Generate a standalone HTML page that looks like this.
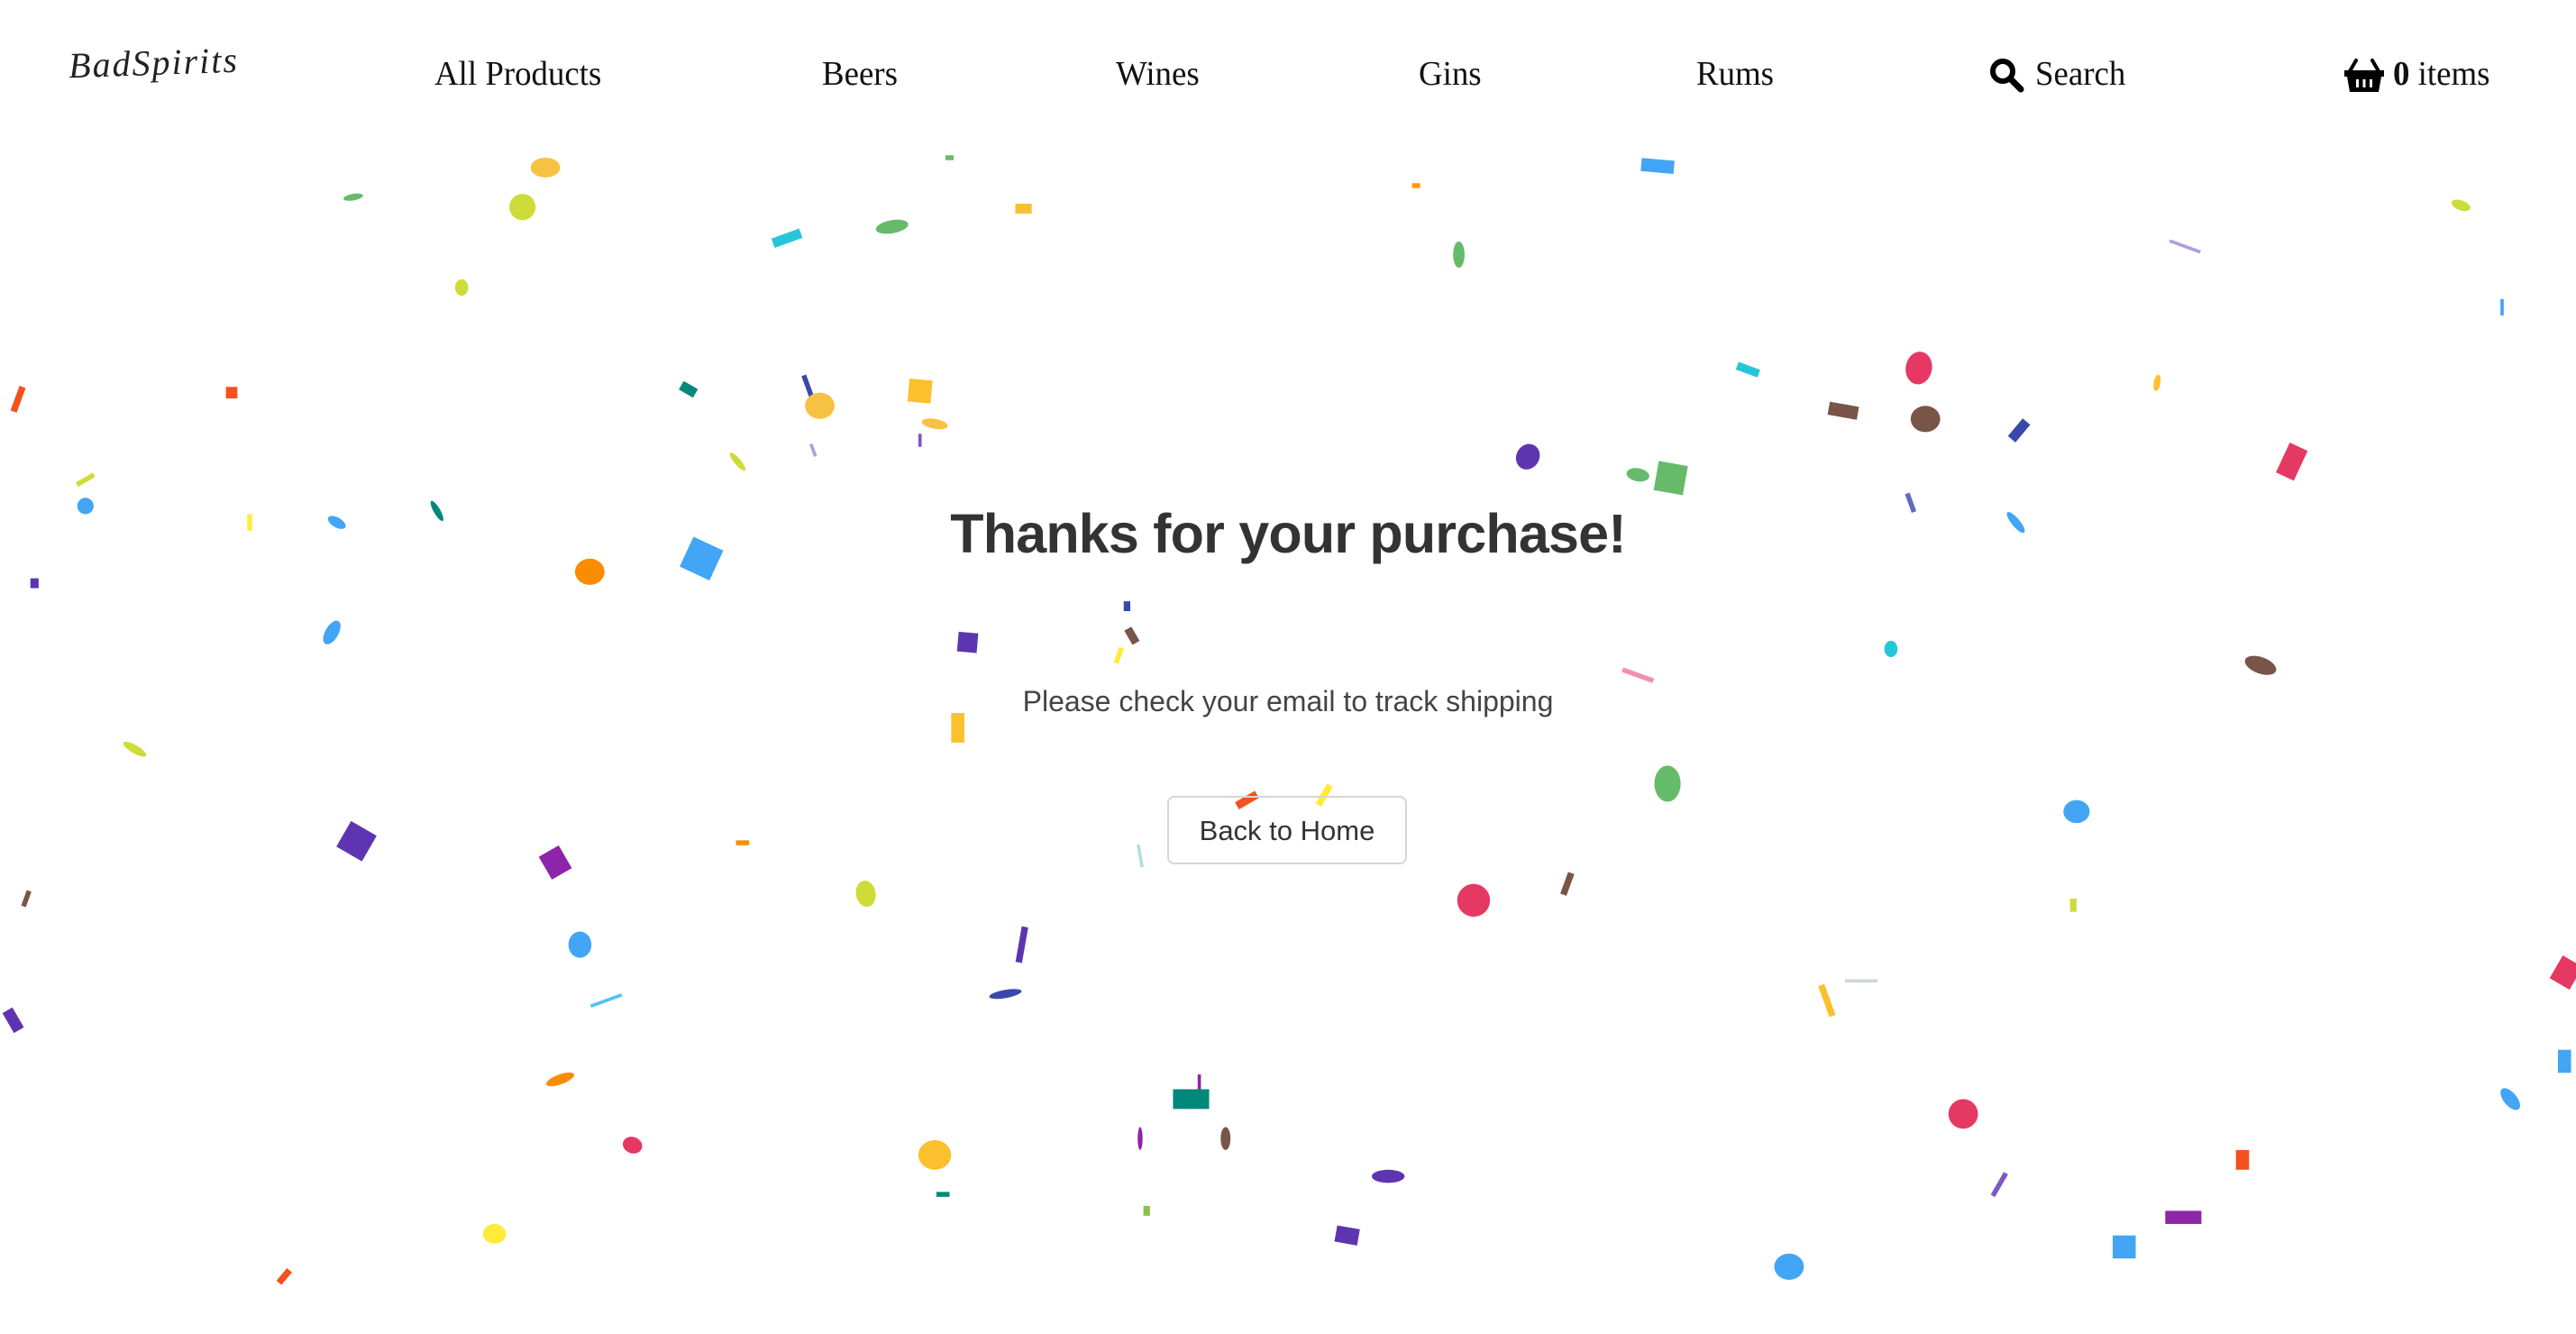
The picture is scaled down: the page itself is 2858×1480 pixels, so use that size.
<!DOCTYPE html>
<html><head><meta charset="utf-8"><style>
html,body{margin:0;padding:0;background:#fff;width:2858px;height:1480px;overflow:hidden;position:relative;font-family:"Liberation Sans",sans-serif}
.nav{position:absolute;top:60px;font-family:"Liberation Serif",serif;font-size:38px;color:#111;line-height:44px;white-space:nowrap;transform-origin:left center;transform:scaleX(0.97)}
.logo{position:absolute;left:76px;top:46px;font-family:"Liberation Serif",serif;font-style:italic;font-size:40px;color:#222;letter-spacing:2px;transform:rotate(-2deg)}
#conf{position:absolute;left:0;top:0;width:1568px;height:812px;transform:scale(1.8227);transform-origin:0 0}
#conf i{position:absolute;display:block;transform:translate(-50%,-50%)}
h1{position:absolute;left:0;width:2858px;top:557px;margin:0;text-align:center;font-size:61px;font-weight:bold;color:#333;letter-spacing:-0.8px}
.sub{position:absolute;left:0;width:2858px;top:760px;text-align:center;font-size:32px;color:#444}
.btn{position:absolute;left:1295px;top:883px;width:266px;height:76px;border:2px solid #d6d6d6;border-radius:8px;box-sizing:border-box;text-align:center;line-height:74px;font-size:31px;color:#333;background:transparent}
</style></head><body>
<div id="conf"></div>
<div class="logo">BadSpirits</div>
<div class="nav" style="left:482px">All Products</div>
<div class="nav" style="left:912px">Beers</div>
<div class="nav" style="left:1238px">Wines</div>
<div class="nav" style="left:1574px">Gins</div>
<div class="nav" style="left:1882px">Rums</div>
<svg style="position:absolute;left:2206px;top:63px" width="40" height="40" viewBox="0 0 40 40"><circle cx="16" cy="16" r="11" fill="none" stroke="#000" stroke-width="6"/><line x1="24" y1="24" x2="36" y2="36" stroke="#000" stroke-width="7" stroke-linecap="round"/></svg>
<div class="nav" style="left:2258px">Search</div>
<svg style="position:absolute;left:2600px;top:63px" width="46" height="40" viewBox="0 0 46 40"><path d="M14 4 L7 16 M32 4 L39 16" stroke="#000" stroke-width="4" stroke-linecap="round"/><rect x="1" y="15" width="44" height="7" fill="#000"/><path d="M4 22 H42 L39 39 H7 Z" fill="#000"/><rect x="14" y="25" width="3" height="9" fill="#fff"/><rect x="21.5" y="25" width="3" height="9" fill="#fff"/><rect x="29" y="25" width="3" height="9" fill="#fff"/></svg>
<div class="nav" style="left:2655px"><b>0</b> items</div>
<h1>Thanks for your purchase!</h1>
<div class="sub">Please check your email to track shipping</div>
<div class="btn">Back to Home</div>
<script>
var d=[[332,102,18,12,"#f7c244",0,1],[318,126,16,16,"#cddc39",0,1],[215,120,12,4,"#66bb6a",-10,1],[281,175,8,10,"#cddc39",0,1],[578,96,5,3,"#66bb6a",0,0],[623,127,10,6,"#fbc02d",0,0],[543,138,20,8,"#66bb6a",-10,1],[479,145,18,6,"#26c6da",-20,0],[1009,101,20,8,"#42a5f5",5,0],[862,113,5,3,"#ff9800",0,0],[888,155,7,16,"#66bb6a",0,1],[1498,125,12,6,"#cddc39",20,1],[1330,150,20,2,"#b39ddb",20,0],[1523,187,2,10,"#42a5f5",0,0],[11,243,4,16,"#f4511e",20,0],[141,239,7,7,"#f4511e",0,0],[419,237,10,6,"#00897b",30,0],[492,236,3,16,"#3949ab",-20,0],[499,247,18,16,"#f7c244",0,1],[560,238,14,14,"#fbc02d",5,0],[569,258,16,6,"#f7c244",10,1],[1064,225,14,5,"#26c6da",20,0],[1122,250,18,8,"#795548",10,0],[1168,224,16,20,"#e53964",10,1],[1172,255,18,16,"#795548",0,1],[1229,262,6,14,"#3949ab",40,0],[1313,233,4,10,"#fbc02d",10,1],[1395,281,12,20,"#e53964",25,0],[930,278,14,16,"#5e35b1",30,1],[997,289,14,8,"#66bb6a",10,1],[1017,291,18,18,"#66bb6a",10,0],[52,292,12,3,"#cddc39",-30,0],[52,308,10,10,"#42a5f5",0,1],[152,318,3,10,"#ffeb3b",0,0],[205,318,12,6,"#42a5f5",30,1],[266,311,4,14,"#00897b",-30,1],[449,281,4,14,"#cddc39",-40,1],[495,274,2,8,"#b39ddb",-20,0],[560,268,2,8,"#7e57c2",0,0],[1163,306,3,12,"#5c6bc0",-20,0],[1227,318,5,16,"#42a5f5",-40,1],[21,355,5,6,"#5e35b1",0,0],[359,348,18,16,"#fb8c00",0,1],[427,340,20,20,"#42a5f5",25,0],[202,385,8,16,"#42a5f5",30,1],[589,391,12,12,"#5e35b1",5,0],[686,369,4,6,"#3949ab",0,0],[689,387,5,10,"#795548",-30,0],[681,399,3,10,"#ffeb3b",20,0],[997,411,20,3,"#f48fb1",20,0],[1151,395,8,10,"#26c6da",0,1],[1376,405,20,10,"#795548",20,1],[82,456,16,5,"#cddc39",30,1],[583,443,8,18,"#fbc02d",0,0],[1015,477,16,22,"#66bb6a",0,1],[759,487,14,5,"#f4511e",-30,0],[806,484,4,14,"#ffeb3b",30,0],[1264,494,16,14,"#42a5f5",0,1],[16,547,3,10,"#795548",20,0],[217,512,18,18,"#5e35b1",30,0],[338,525,14,16,"#8e24aa",-30,0],[452,513,8,3,"#fb8c00",0,0],[527,544,12,16,"#cddc39",-10,1],[694,521,2,14,"#b2dfdb",-10,0],[954,538,4,14,"#795548",20,0],[897,548,20,20,"#e53964",0,1],[1262,551,4,8,"#cddc39",0,0],[353,575,14,16,"#42a5f5",0,1],[622,575,4,22,"#5e35b1",10,0],[612,605,20,5,"#3949ab",-10,1],[369,609,20,2,"#4fc3f7",-20,0],[1112,609,4,20,"#fbc02d",-20,0],[1133,597,20,2,"#cfd8dc",0,0],[8,621,7,14,"#5e35b1",-30,0],[1562,592,14,16,"#e53964",30,0],[1561,646,8,14,"#42a5f5",0,0],[1528,669,8,16,"#42a5f5",-40,1],[341,657,18,6,"#fb8c00",-20,1],[730,659,2,10,"#8e24aa",0,0],[725,669,22,12,"#00897b",0,0],[694,693,3,14,"#8e24aa",0,1],[746,693,6,14,"#795548",0,1],[385,697,12,10,"#e53964",20,1],[569,703,20,18,"#fbc02d",0,1],[1195,678,18,18,"#e53964",0,1],[1365,706,8,12,"#f4511e",0,0],[1217,721,3,16,"#7e57c2",30,0],[845,716,20,8,"#5e35b1",0,1],[574,727,8,3,"#00897b",0,0],[698,737,4,6,"#8bc34a",0,0],[1329,741,22,8,"#8e24aa",0,0],[820,752,14,10,"#5e35b1",10,0],[1293,759,14,14,"#42a5f5",0,0],[301,751,14,12,"#ffeb3b",0,1],[1089,771,18,16,"#42a5f5",0,1],[173,777,4,10,"#f4511e",40,0]];
var h="";d.forEach(function(a){h+='<i style="left:'+a[0]+'px;top:'+a[1]+'px;width:'+a[2]+'px;height:'+a[3]+'px;background:'+a[4]+';transform:translate(-50%,-50%) rotate('+a[5]+'deg);border-radius:'+(a[6]?'50%':'0')+'"></i>';});
document.getElementById('conf').innerHTML=h;
</script>
</body></html>
